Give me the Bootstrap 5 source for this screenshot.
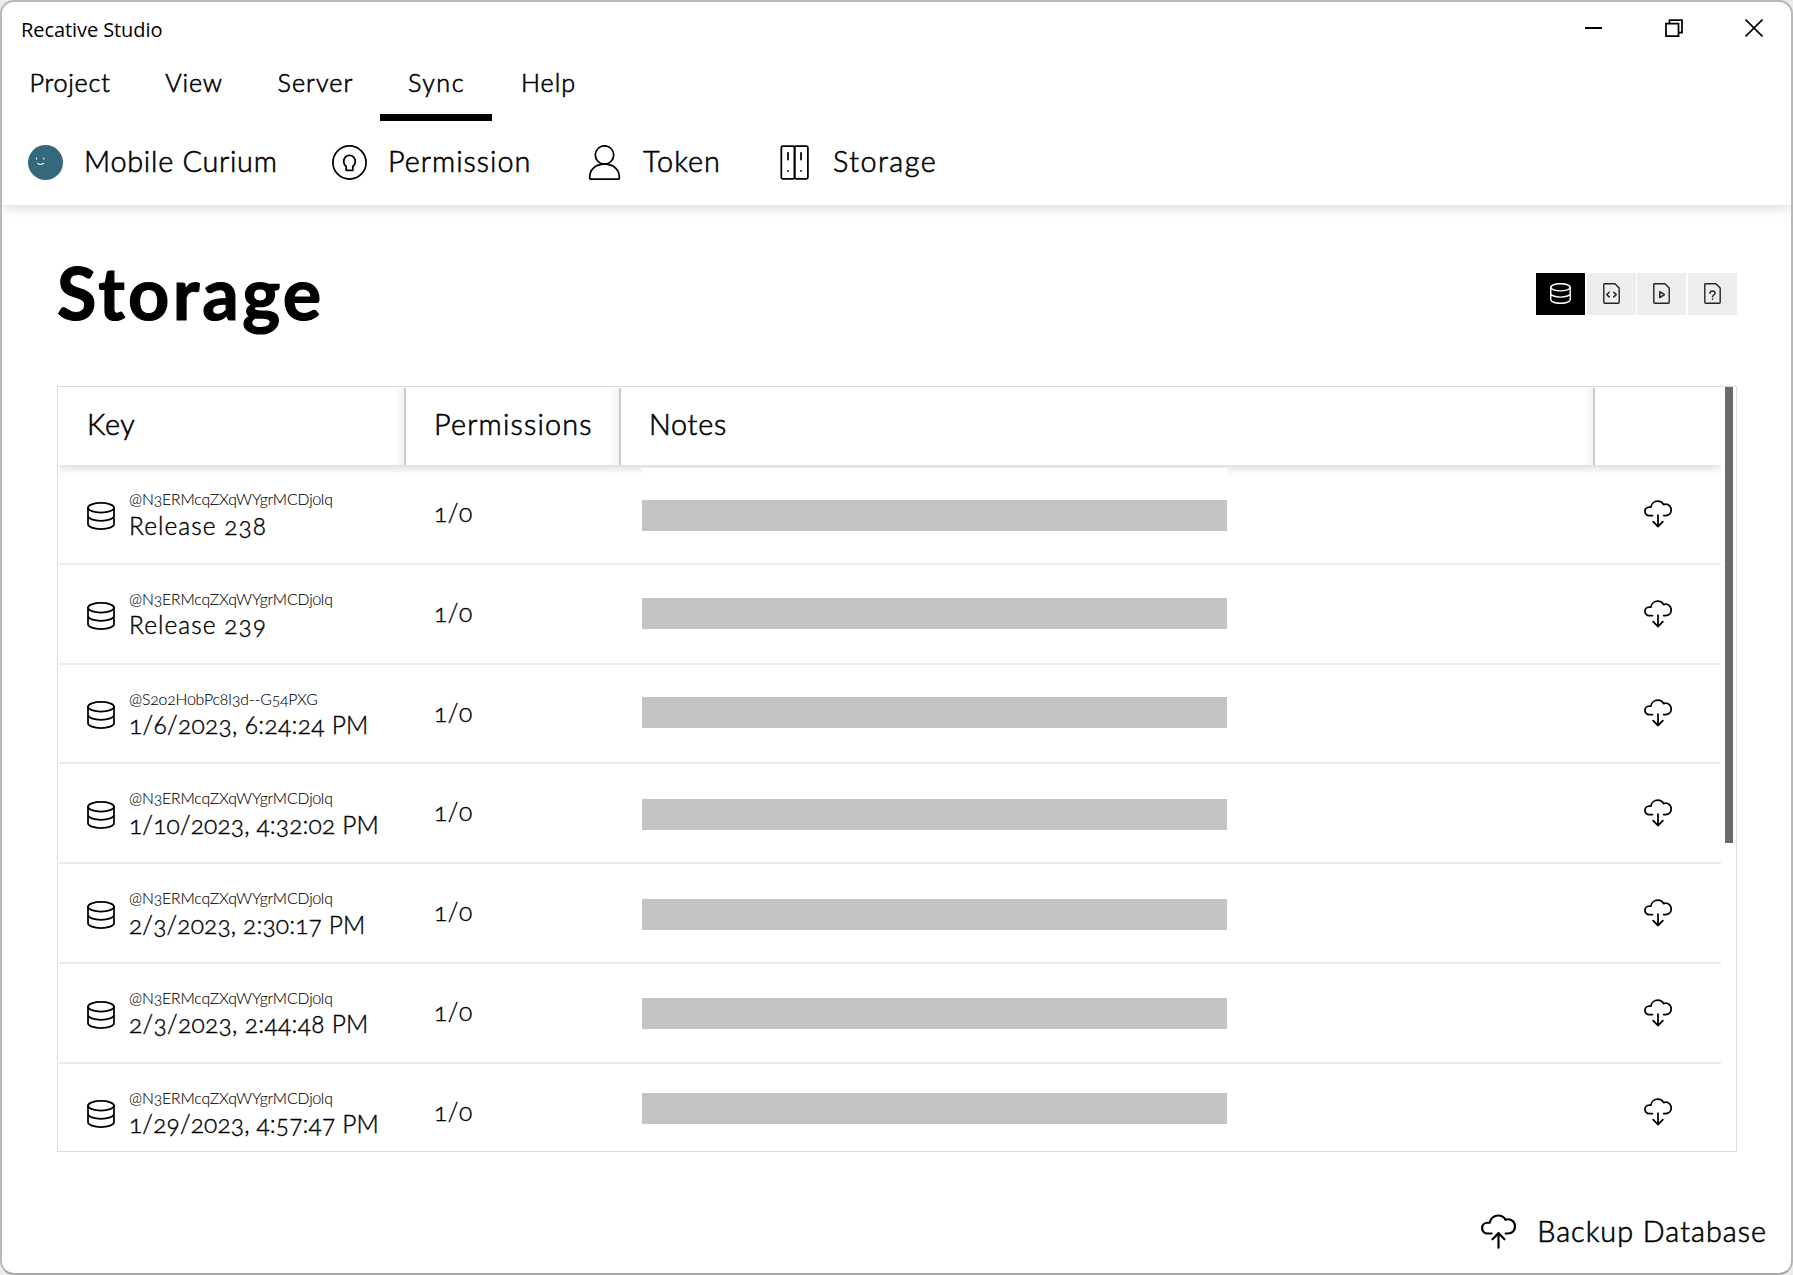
<!DOCTYPE html>
<html lang="en">
<head>
<meta charset="utf-8">
<title>Recative Studio</title>
<meta name="viewport" content="width=device-width, initial-scale=1">
<link href="https://cdn.jsdelivr.net/npm/bootstrap@5.3.0/dist/css/bootstrap.min.css" rel="stylesheet">
<style>
  html, body { height: 100%; }
  body { background: #ececec; color: #000; font-family: Lato, sans-serif; font-weight: 300; overflow: hidden; -webkit-text-stroke: .6px #000; }
  svg { display: block; flex: none; fill: none; stroke: currentColor; stroke-width: 1.75; stroke-linecap: round; stroke-linejoin: round; }
  .app-window { height: 1275px; border: 2px solid #b8b8b8; border-bottom-color: #a9a9a9; border-radius: 14px; background: #fff; overflow: hidden; }

  .app-header { height: 203px; box-shadow: 0 2px 12px rgba(0,0,0,.17); }
  .title-bar { height: 56px; padding: 0 28px 0 19px; }
  .app-title { font: 400 20px/30px "Open Sans", sans-serif; letter-spacing: -.08px; -webkit-text-stroke: 0; padding-bottom: 1px; }
  .window-controls { gap: 62px; padding-bottom: 4px; }
  .window-controls svg { stroke-linecap: butt; stroke-linejoin: miter; }

  .menu-tab { font-size: 25.2px; line-height: 49px; height: 63px; padding-left: 1px; color: #000; text-align: center; text-decoration: none; border-bottom: 7px solid transparent; white-space: nowrap; }
  .menu-tab.active { border-bottom-color: #000; }
  .tab-project { width: 135px; } .tab-view { width: 113px; } .tab-server { width: 130px; } .tab-sync { width: 112px; } .tab-help { width: 112px; }

  .tool-strip { height: 84px; padding-left: 26px; padding-bottom: 2px; }
  .tool-item { gap: 21px; font-size: 28.8px; line-height: 34px; white-space: nowrap; }
  .tool-item span { padding-bottom: 2px; }
  .tool-user { width: 304px; } .tool-perm { width: 255px; } .tool-token { width: 190px; }

  .page-body { padding: 44px 54px 0 55px; }
  .page-head { height: 137px; }
  .page-title { font-size: 72px; line-height: 86px; font-weight: 700; letter-spacing: 3.3px; -webkit-text-stroke: 1.2px #000; }
  .filter-set { gap: 1.75px; padding-top: 24px; }
  .filter-btn { width: 49px; height: 42px; background: #ededed; border-radius: 0; }
  .filter-btn.active { background: #000; color: #fff; }
  .filter-btn svg { stroke-width: 1.4; margin-bottom: 1px; }
  .filter-btn.active svg { stroke-width: 1.9; }

  .data-frame { height: 766px; border: 1px solid #dcdcdc; overflow: hidden; }
  .data-list { width: 1662px; margin: 1px 0 0 1px; }
  .data-head { height: 77px; font-size: 28.8px; box-shadow: 0 3px 9px rgba(0,0,0,.16); clip-path: inset(0 0 -16px 0); position: relative; background: #fff; }
  .data-head > div { padding: 0 0 4px 28px; display: flex; align-items: center; }
  .data-head > div:not(:last-child) { border-right: 2px solid #cacaca; background: linear-gradient(to left, #f2f2f2, #fff 9px); }
  .col-key { width: 347px; } .col-perm { width: 215px; } .col-note { width: 974px; } .col-act { width: 126px; }
  .data-row { height: 99.75px; border-bottom: 2px solid #ececec; }
  .data-row .col-key { gap: 14px; padding-left: 28px; }
  .data-row .col-key svg { margin-top: 4px; }
  .data-row .col-perm { padding: 0 0 1px 28px; font-size: 24.5px; letter-spacing: .6px; }
  .data-row .col-act { padding-left: 49px; }
  .data-row { font-variant-numeric: oldstyle-nums; -webkit-text-stroke-width: .4px; }
  .item-id { font-size: 15.75px; line-height: 20px; margin-top: 2px; letter-spacing: -.15px; -webkit-text-stroke-width: .1px; white-space: nowrap; }
  .item-name { font-size: 24.5px; line-height: 30px; margin-top: 1.5px; white-space: nowrap; letter-spacing: .14px; }
  .item-name.trk-03 { letter-spacing: .3px; }
  .item-name.trk-11 { letter-spacing: 1.05px; }
  .note-patch { width: 585px; height: 97px; margin-left: 21px; background: #fff; }
  .note-bar { height: 31px; background: #c3c3c3; margin-top: 35px; }
  .data-row:nth-child(2) .note-patch { position: relative; height: 94px; margin-top: 3px; }
  .data-row:nth-child(2) .note-bar { margin-top: 32px; }
  .data-row:nth-child(3) .note-bar { margin-top: 33px; }
  .data-row:nth-child(4) .note-bar { margin-top: 32px; }
  .data-row:nth-child(7) .note-bar { margin-top: 34px; }
  .data-row:nth-child(8) .note-bar { margin-top: 29px; }
  .scroll-thumb { width: 8px; height: 456px; margin-left: 4px; background: #6b6b6b; }

  .app-footer { height: 121px; padding: 58px 24px 0 0; font-size: 28.8px; line-height: 42px; }
  .footer-action { gap: 21px; }

  .trk-08 { letter-spacing: .75px; } .trk-10 { letter-spacing: 1px; } .trk-12 { letter-spacing: 1.2px; } .trk-15 { letter-spacing: 1.45px; }
</style>
<script src="https://cdn.jsdelivr.net/npm/bootstrap@5.3.0/dist/js/bootstrap.bundle.min.js"></script>
</head>
<body>
<svg class="d-none">
  <symbol id="ico-db" viewBox="0 0 28 28"><ellipse cx="14" cy="5.7" rx="13" ry="4.8"/><path d="M1 5.7v16.6c0 2.6 5.8 4.8 13 4.8s13-2.2 13-4.8V5.7M1 14c0 2.6 5.8 4.8 13 4.8S27 16.600 27 14"/></symbol>
  <symbol id="ico-down" viewBox="0 0 28 28"><path d="M8.500 15.600H5.200C2.800 15.600.9 13.700.9 11.300S2.800 7 5.200 7h1.700C7.400 3.600 10.300 1.200 13.800 1.200c2.500 0 4.700 1.300 5.800 3.400.7-.3 1.300-.4 2-.4 3.200 0 5.600 2.500 5.600 5.600 0 3.300-2.300 5.800-5.600 5.800h-1.900M14 15.200v11.300M9.200 21.700l4.800 4.900 4.800-4.900"/></symbol>
  <symbol id="ico-up" viewBox="0 0 28 28"><path d="M8.500 15.600H5.200C2.800 15.600.9 13.700.9 11.300S2.800 7 5.200 7h1.700C7.400 3.600 10.300 1.200 13.800 1.200c2.500 0 4.700 1.300 5.800 3.400.7-.3 1.300-.4 2-.4 3.200 0 5.600 2.500 5.600 5.600 0 3.300-2.300 5.800-5.600 5.800h-1.900M14 15.400v11.500M9.200 20.200l4.800-4.900 4.800 4.900"/></symbol>
  <symbol id="ico-file" viewBox="0 0 21 21"><path d="M3.200.8h10.700l4.300 4.300v14.100c0 .6-.4 1-1 1H3.800c-.6 0-1-.4-1-1V1.600c0-.5.100-.8.400-.8z"/></symbol>
</svg>

<div class="app-window d-flex flex-column">
  <header class="app-header flex-shrink-0">
    <div class="title-bar d-flex justify-content-between align-items-center">
      <div class="app-title">Recative Studio</div>
      <div class="window-controls d-flex align-items-center">
        <svg width="18" height="18" viewBox="0 0 18 18"><path stroke-width="2" d="M-1 9h18"/></svg>
        <svg width="18" height="18" viewBox="0 0 18 18"><path d="M1 4.500h12.500V17H1zM4.500 4.500V1H17v12.500h-3.500"/></svg>
        <svg width="18" height="18" viewBox="0 0 18 18"><path stroke-width="1.600" d="M.5.500l17 17M17.500.5l-17 17"/></svg>
      </div>
    </div>
    <nav class="d-flex">
      <a class="menu-tab tab-project trk-08">Project</a>
      <a class="menu-tab tab-view trk-08">View</a>
      <a class="menu-tab tab-server trk-10">Server</a>
      <a class="menu-tab tab-sync trk-15 active">Sync</a>
      <a class="menu-tab tab-help trk-10">Help</a>
    </nav>
    <div class="tool-strip d-flex align-items-center">
      <div class="tool-item tool-user d-flex align-items-center trk-08">
        <svg width="35" height="35" viewBox="0 0 35 35"><circle cx="17.500" cy="17.500" r="17.500" fill="#34697c" stroke="none"/><g stroke="#fff" stroke-width="1.200"><path d="M8.500 13.200v.8M15.800 13.200v.8M9.900 18.400q2.700 2 5.400 0"/></g></svg>
        <span>Mobile Curium</span>
      </div>
      <div class="tool-item tool-perm d-flex align-items-center trk-10">
        <svg width="35" height="35" viewBox="0 0 35 35"><circle cx="17.500" cy="17.500" r="16.600"/><path d="M14.200 25.300h6.600v-3.800c1.700-1.300 2.500-3 2.500-5 0-3.600-2.600-6.100-5.800-6.100s-5.800 2.500-5.800 6.100c0 2 .8 3.700 2.500 5z"/></svg>
        <span>Permission</span>
      </div>
      <div class="tool-item tool-token d-flex align-items-center trk-10">
        <svg width="35" height="35" viewBox="0 0 35 35"><circle cx="17.500" cy="10" r="9.200"/><path d="M2.700 33C2.400 25 8 19.200 17.500 19.200S32.600 25 32.300 33c0 .8-.4 1.200-1.200 1.200H3.900c-.8 0-1.200-.4-1.200-1.200z"/></svg>
        <span>Token</span>
      </div>
      <div class="tool-item d-flex align-items-center trk-15">
        <svg width="35" height="35" viewBox="0 0 35 35"><rect x="4.300" y="1.200" width="13.300" height="32.600" rx="1.500"/><rect x="17.600" y="1.200" width="13.300" height="32.600" rx="1.500"/><path d="M11 7.800v6.700M24 7.800v6.700M11 25.800v.3M24 25.800v.3"/></svg>
        <span>Storage</span>
      </div>
    </div>
  </header>

  <main class="page-body">
    <div class="page-head d-flex justify-content-between align-items-start">
      <h1 class="page-title m-0">Storage</h1>
      <div class="filter-set d-flex">
        <button class="btn filter-btn active border-0 p-0 d-flex align-items-center justify-content-center"><svg width="21" height="21"><use href="#ico-db"/></svg></button>
        <button class="btn filter-btn border-0 p-0 d-flex align-items-center justify-content-center"><svg width="21" height="21" viewBox="0 0 21 21"><use href="#ico-file"/><path stroke-width="1.500" d="M8.200 9.300l-2.400 2.300 2.400 2.300M12.800 9.300l2.400 2.300-2.400 2.300"/></svg></button>
        <button class="btn filter-btn border-0 p-0 d-flex align-items-center justify-content-center"><svg width="21" height="21" viewBox="0 0 21 21"><use href="#ico-file"/><path stroke-width="1.500" d="M8.800 8.700l4.700 2.900-4.700 2.900z"/></svg></button>
        <button class="btn filter-btn border-0 p-0 d-flex align-items-center justify-content-center"><svg width="21" height="21" viewBox="0 0 21 21"><use href="#ico-file"/><path stroke-width="1.500" d="M8 10.300c0-1.400 1.100-2.200 2.500-2.200s2.500.9 2.500 2.100c0 1.900-2.500 1.700-2.500 3.600M10.500 16.100v.1"/></svg></button>
      </div>
    </div>

    <div class="data-frame d-flex align-items-start">
      <div class="data-list flex-shrink-0">
        <div class="data-head d-flex">
          <div class="col-key trk-08">Key</div><div class="col-perm trk-12">Permissions</div><div class="col-note trk-08">Notes</div><div class="col-act"></div>
        </div>
        <div class="data-row d-flex">
          <div class="col-key d-flex align-items-center"><svg width="28" height="28"><use href="#ico-db"/></svg><div><div class="item-id">@N3ERMcqZXqWYgrMCDj0lq</div><div class="item-name trk-11">Release 238</div></div></div>
          <div class="col-perm d-flex align-items-center">1/0</div>
          <div class="col-note"><div class="note-patch overflow-hidden"><div class="note-bar"></div></div></div>
          <div class="col-act d-flex align-items-center"><svg width="28" height="28"><use href="#ico-down"/></svg></div>
        </div>
        <div class="data-row d-flex">
          <div class="col-key d-flex align-items-center"><svg width="28" height="28"><use href="#ico-db"/></svg><div><div class="item-id">@N3ERMcqZXqWYgrMCDj0lq</div><div class="item-name trk-11">Release 239</div></div></div>
          <div class="col-perm d-flex align-items-center">1/0</div>
          <div class="col-note"><div class="note-patch overflow-hidden"><div class="note-bar"></div></div></div>
          <div class="col-act d-flex align-items-center"><svg width="28" height="28"><use href="#ico-down"/></svg></div>
        </div>
        <div class="data-row d-flex">
          <div class="col-key d-flex align-items-center"><svg width="28" height="28"><use href="#ico-db"/></svg><div><div class="item-id">@S2o2H0bPc8I3d--G54PXG</div><div class="item-name trk-03">1/6/2023, 6:24:24 PM</div></div></div>
          <div class="col-perm d-flex align-items-center">1/0</div>
          <div class="col-note"><div class="note-patch overflow-hidden"><div class="note-bar"></div></div></div>
          <div class="col-act d-flex align-items-center"><svg width="28" height="28"><use href="#ico-down"/></svg></div>
        </div>
        <div class="data-row d-flex">
          <div class="col-key d-flex align-items-center"><svg width="28" height="28"><use href="#ico-db"/></svg><div><div class="item-id">@N3ERMcqZXqWYgrMCDj0lq</div><div class="item-name">1/10/2023, 4:32:02 PM</div></div></div>
          <div class="col-perm d-flex align-items-center">1/0</div>
          <div class="col-note"><div class="note-patch overflow-hidden"><div class="note-bar"></div></div></div>
          <div class="col-act d-flex align-items-center"><svg width="28" height="28"><use href="#ico-down"/></svg></div>
        </div>
        <div class="data-row d-flex">
          <div class="col-key d-flex align-items-center"><svg width="28" height="28"><use href="#ico-db"/></svg><div><div class="item-id">@N3ERMcqZXqWYgrMCDj0lq</div><div class="item-name">2/3/2023, 2:30:17 PM</div></div></div>
          <div class="col-perm d-flex align-items-center">1/0</div>
          <div class="col-note"><div class="note-patch overflow-hidden"><div class="note-bar"></div></div></div>
          <div class="col-act d-flex align-items-center"><svg width="28" height="28"><use href="#ico-down"/></svg></div>
        </div>
        <div class="data-row d-flex">
          <div class="col-key d-flex align-items-center"><svg width="28" height="28"><use href="#ico-db"/></svg><div><div class="item-id">@N3ERMcqZXqWYgrMCDj0lq</div><div class="item-name trk-03">2/3/2023, 2:44:48 PM</div></div></div>
          <div class="col-perm d-flex align-items-center">1/0</div>
          <div class="col-note"><div class="note-patch overflow-hidden"><div class="note-bar"></div></div></div>
          <div class="col-act d-flex align-items-center"><svg width="28" height="28"><use href="#ico-down"/></svg></div>
        </div>
        <div class="data-row d-flex">
          <div class="col-key d-flex align-items-center"><svg width="28" height="28"><use href="#ico-db"/></svg><div><div class="item-id">@N3ERMcqZXqWYgrMCDj0lq</div><div class="item-name">1/29/2023, 4:57:47 PM</div></div></div>
          <div class="col-perm d-flex align-items-center">1/0</div>
          <div class="col-note"><div class="note-patch overflow-hidden"><div class="note-bar"></div></div></div>
          <div class="col-act d-flex align-items-center"><svg width="28" height="28"><use href="#ico-down"/></svg></div>
        </div>
      </div>
      <div class="scroll-thumb flex-shrink-0"></div>
    </div>
  </main>

  <footer class="app-footer d-flex justify-content-end">
    <div class="footer-action d-flex align-items-center align-self-start trk-10">
      <svg width="35" height="35"><use href="#ico-up"/></svg>
      <span>Backup Database</span>
    </div>
  </footer>
</div>
</body>
</html>
